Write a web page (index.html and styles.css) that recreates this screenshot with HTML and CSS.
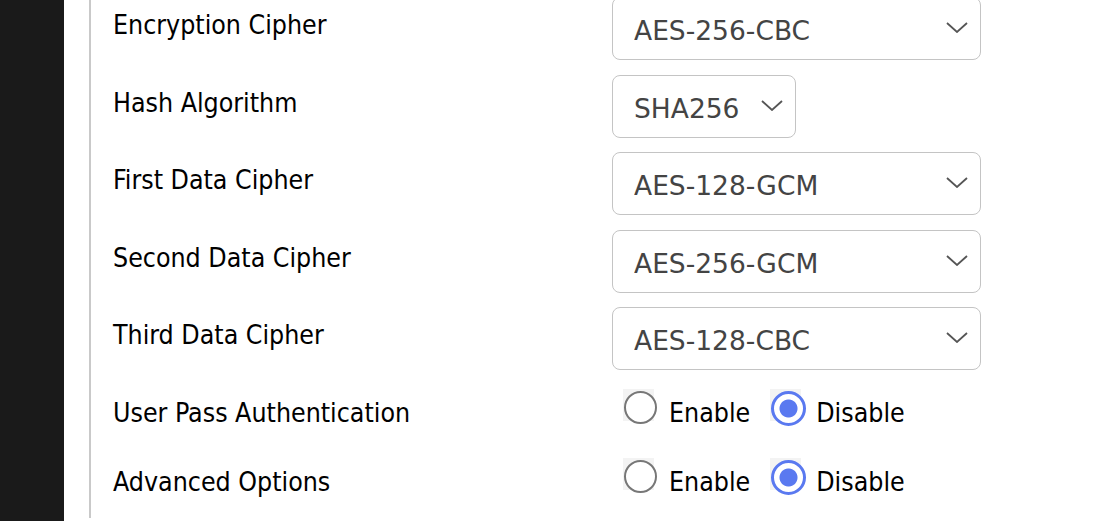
FILE: index.html
```html
<!DOCTYPE html>
<html lang="en">
<head>
  <meta charset="UTF-8">
  <title>VPN Server - Cipher Settings</title>
  <link rel="stylesheet" href="styles.css">
</head>
<body>
  <div class="page">
    <aside class="sidebar"></aside>

    <main class="main">
      <div class="form">

        <div class="row">
          <label class="label" for="cipher">Encryption Cipher</label>
          <div class="select-wrap wide">
            <select id="cipher" class="select">
              <option>AES-256-CBC</option>
              <option>AES-128-CBC</option>
            </select>
            <svg class="chevron" viewBox="0 0 22 11"><path d="M1 1 L11 10 L21 1"/></svg>
          </div>
        </div>

        <div class="row">
          <label class="label" for="hash">Hash Algorithm</label>
          <div class="select-wrap narrow">
            <select id="hash" class="select">
              <option>SHA256</option>
              <option>SHA1</option>
            </select>
            <svg class="chevron" viewBox="0 0 22 11"><path d="M1 1 L11 10 L21 1"/></svg>
          </div>
        </div>

        <div class="row">
          <label class="label" for="data1">First Data Cipher</label>
          <div class="select-wrap wide">
            <select id="data1" class="select">
              <option>AES-128-GCM</option>
            </select>
            <svg class="chevron" viewBox="0 0 22 11"><path d="M1 1 L11 10 L21 1"/></svg>
          </div>
        </div>

        <div class="row">
          <label class="label" for="data2">Second Data Cipher</label>
          <div class="select-wrap wide">
            <select id="data2" class="select">
              <option>AES-256-GCM</option>
            </select>
            <svg class="chevron" viewBox="0 0 22 11"><path d="M1 1 L11 10 L21 1"/></svg>
          </div>
        </div>

        <div class="row">
          <label class="label" for="data3">Third Data Cipher</label>
          <div class="select-wrap wide">
            <select id="data3" class="select">
              <option>AES-128-CBC</option>
            </select>
            <svg class="chevron" viewBox="0 0 22 11"><path d="M1 1 L11 10 L21 1"/></svg>
          </div>
        </div>

        <div class="row radio-row">
          <span class="label">User Pass Authentication</span>
          <div class="radios">
            <label class="radio"><input type="radio" name="userpass"><span>Enable</span></label>
            <label class="radio"><input type="radio" name="userpass" checked><span>Disable</span></label>
          </div>
        </div>

        <div class="row radio-row">
          <span class="label">Advanced Options</span>
          <div class="radios">
            <label class="radio"><input type="radio" name="advanced"><span>Enable</span></label>
            <label class="radio"><input type="radio" name="advanced" checked><span>Disable</span></label>
          </div>
        </div>

      </div>
    </main>
  </div>
</body>
</html>
```

FILE: styles.css
```css
* { box-sizing: border-box; }

html, body {
  margin: 0;
  height: 100%;
  overflow: hidden;
}

body {
  font-family: 'DejaVu Sans', sans-serif;
  font-stretch: condensed;
  font-size: 26.5px;
  color: #000;
  background: #fff;
}

.page {
  display: flex;
  height: 100%;
}

.sidebar {
  width: 64px;
  background-color: #1a1a1a;
}

.main {
  flex: 1;
  padding-left: 25px;
}

.form {
  height: 100%;
  border-left: 2px solid #c9c9c9;
  padding-left: 22px;
  margin-top: -3px;
}

.row {
  display: flex;
  align-items: flex-start;
  height: 77.5px;
}

.label {
  width: 499px;
  padding-top: 13px;
  line-height: 30px;
}

.select-wrap {
  position: relative;
  height: 63px;
}

.select-wrap.wide { width: 369px; }
.select-wrap.narrow { width: 184px; }

.select {
  appearance: none;
  width: 100%;
  height: 100%;
  padding: 4px 0 0 21px;
  border: 1.5px solid #c4c4c4;
  border-radius: 8px;
  background: #fff;
  font-family: inherit;
  font-stretch: normal;
  font-size: 26.5px;
  color: #444;
}

.chevron {
  position: absolute;
  right: 13px;
  top: 25px;
  width: 22px;
  height: 11px;
  fill: none;
  stroke: #555;
  stroke-width: 1.8;
  pointer-events: none;
}

.radio-row {
  height: 69px;
}

.radios {
  display: flex;
  gap: 20px;
  padding-top: 4px;
  padding-left: 11px;
}

.radio {
  display: flex;
  align-items: flex-start;
  gap: 15px;
}

.radio span {
  padding-top: 9px;
  line-height: 30px;
}

.radio input {
  appearance: none;
  margin: 0;
  width: 31px;
  height: 32px;
  background: #f3f3f3;
  position: relative;
}

.radio input::before {
  content: "";
  position: absolute;
  left: 1px;
  top: 2px;
  width: 29px;
  height: 29px;
  border-radius: 50%;
  border: 2.5px solid #777;
  background: #fff;
}

.radio input:checked::before {
  border: 3px solid #5a79f0;
  background: radial-gradient(circle, #5a79f0 0 8.5px, #fff 9.5px);
}
```
